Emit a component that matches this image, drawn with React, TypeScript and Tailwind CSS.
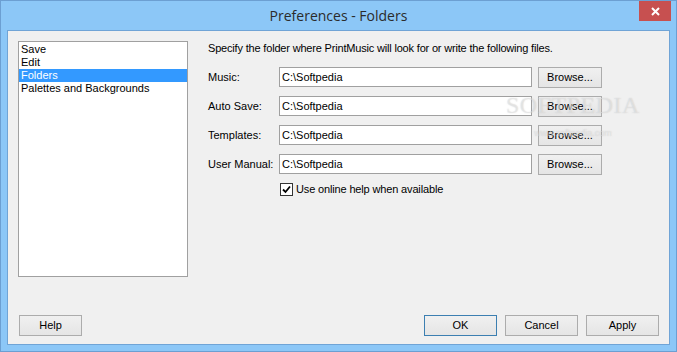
import { useState } from "react";

const sections = ["Save", "Edit", "Folders", "Palettes and Backgrounds"];

const folders = [
  { label: "Music:", value: "C:\\Softpedia" },
  { label: "Auto Save:", value: "C:\\Softpedia" },
  { label: "Templates:", value: "C:\\Softpedia" },
  { label: "User Manual:", value: "C:\\Softpedia" },
];

function WinButton({ children, width, primary }: { children: React.ReactNode; width: string; primary?: boolean }) {
  return (
    <button
      className={`${width} h-[21px] border ${
        primary ? "border-[#3c7fb1]" : "border-[#acacac]"
      } bg-gradient-to-b from-[#f0f0f0] to-[#e5e5e5] text-[11px] leading-none text-black`}>
      {children}
    </button>
  );
}

export default function App() {
  const [selected, setSelected] = useState("Folders");
  const [useOnline, setUseOnline] = useState(true);

  return (
    <div className="w-[677px] h-[352px] flex flex-col bg-[#8cc7f7] border border-[#6c9fd2] font-['Liberation_Sans',Arial,sans-serif] text-black">
      {/* title bar */}
      <div className="h-[29px] flex shrink-0">
        <div className="flex-1 pl-[37px] flex items-center justify-center pb-[1px] font-['Open_Sans',sans-serif] text-[14px] text-[#2b2b2b]">
          Preferences - Folders
        </div>
        <button className="w-[32px] h-[20px] mr-[5px] bg-[#c75050] flex items-center justify-center">
          <svg width="9" height="9" viewBox="0 0 9 9">
            <path d="M1 1 L8 8 M8 1 L1 8" stroke="white" strokeWidth="2" />
          </svg>
        </button>
      </div>

      {/* client area */}
      <div className="relative mx-[6px] h-[315px] border border-[#70a4d6] bg-[#f0f0f0] flex flex-col pl-[10px] pr-[10px] pt-[10px]">
        <div className="flex">
          <ul className="w-[170px] h-[236px] border border-[#a0a0a0] bg-white pt-[1px] text-[11px] leading-[13px]">
            {sections.map((s) => (
              <li
                key={s}
                onClick={() => setSelected(s)}
                className={`pl-[2px] h-[13px] ${selected === s ? "bg-[#3399ff] text-white" : ""}`}>
                {s}
              </li>
            ))}
          </ul>

          <div className="ml-[20px] flex flex-col pt-[1px] text-[11px]">
            <div className="h-[13px] leading-[13px] tracking-[-0.18px]">
              Specify the folder where PrintMusic will look for or write the following files.
            </div>
            <div className="mt-[12px] flex flex-col gap-[8px]">
              {folders.map((f) => (
                <div key={f.label} className="h-[21px] flex items-start">
                  <span className="w-[71px] h-[20px] flex items-center">{f.label}</span>
                  <input
                    defaultValue={f.value}
                    className="w-[253px] h-[20px] border border-[#a0a0a0] bg-white pl-[2px] text-[11px] outline-none"
                  />
                  <div className="ml-[6px]">
                    <WinButton width="w-[64px]">Browse...</WinButton>
                  </div>
                </div>
              ))}
            </div>
            <label className="mt-[8px] ml-[72px] flex items-center gap-[3px] h-[13px]">
              <span
                onClick={() => setUseOnline(!useOnline)}
                className="w-[13px] h-[13px] border border-[#333] bg-white flex items-center justify-center">
                {useOnline && (
                  <svg width="9" height="9" viewBox="0 0 9 9">
                    <path d="M1 4.5 L3.5 7 L8 1.5" stroke="black" strokeWidth="1.8" fill="none" />
                  </svg>
                )}
              </span>
              <span className="leading-[13px] tracking-[-0.15px]">Use online help when available</span>
            </label>
          </div>
        </div>

        <div className="mt-[38px] flex gap-[8px] pl-[1px]">
          <WinButton width="w-[63px]">Help</WinButton>
          <div className="flex-1" />
          <WinButton width="w-[73px]" primary>OK</WinButton>
          <WinButton width="w-[73px]">Cancel</WinButton>
          <WinButton width="w-[73px]">Apply</WinButton>
        </div>

        {/* watermark */}
        <div className="absolute left-[498px] top-[62px] pointer-events-none flex flex-col items-center text-white/40 [text-shadow:0_0_1px_rgba(160,160,160,0.5)]">
          <span className="font-['Liberation_Serif',serif] text-[24px] leading-none tracking-[0.5px]">SOFTPEDIA</span>
          <span className="text-[9px] leading-none mt-[12px]">www.softpedia.com</span>
        </div>
      </div>
    </div>
  );
}
